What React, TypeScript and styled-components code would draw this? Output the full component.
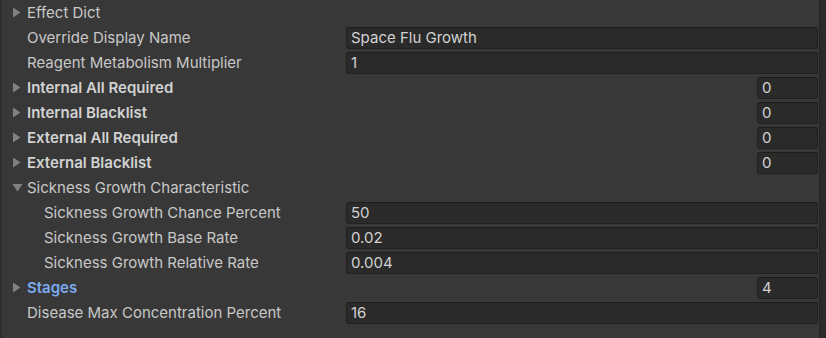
import React from "react";
import styled, { createGlobalStyle } from "styled-components";

const Global = createGlobalStyle`
  html, body { margin: 0; padding: 0; background: #383838; }
  body { font-family: Inter, "Noto Sans", sans-serif; }
`;

const Frame = styled.div`
  display: flex;
  width: 826px;
  height: 338px;
  background: #383838;
  overflow: hidden;
`;

const LeftEdge = styled.div`
  width: 2px;
  flex: none;
  background: #2e2e2e;
`;

const Panel = styled.div`
  flex: 1;
  display: flex;
  flex-direction: column;
`;

const ScrollStrip = styled.div`
  width: 6px;
  flex: none;
  background: #2b2b2b;
  border-left: 1px solid #242424;
`;

const Row = styled.div`
  display: grid;
  grid-template-columns: 344px 1fr;
  align-items: center;
  height: 25px;
  padding-right: 1px;
`;

const LabelCell = styled.div<{ $indent: number }>`
  display: flex;
  align-items: center;
  padding-left: ${(p) => 10 + p.$indent * 17}px;
  min-width: 0;
`;

const Arrow = styled.span`
  width: 15px;
  flex: none;
  display: flex;
  align-items: center;
`;

const Label = styled.span<{ $bold?: boolean; $blue?: boolean }>`
  font-size: 15px;
  font-weight: ${(p) => (p.$bold ? 600 : 400)};
  color: ${(p) => (p.$blue ? "#7babf1" : p.$bold ? "#d2d2d2" : "#c8c8c8")};
  white-space: nowrap;
`;

const Field = styled.div<{ $small?: boolean }>`
  box-sizing: border-box;
  height: 22px;
  justify-self: ${(p) => (p.$small ? "end" : "stretch")};
  width: ${(p) => (p.$small ? "61px" : "auto")};
  background: #2a2a2a;
  border: 1px solid #212121;
  border-top-color: #1d1d1d;
  border-radius: 3px;
  padding-left: 4px;
  display: flex;
  align-items: center;
  font-size: 15px;
  color: #d2d2d2;
  white-space: nowrap;
`;

const RightTri = () => (
  <svg width="9" height="11" viewBox="0 0 9 11">
    <path d="M1 0.5 L8.5 5.5 L1 10.5 Z" fill="#808080" />
  </svg>
);
const DownTri = () => (
  <svg width="11" height="9" viewBox="0 0 11 9">
    <path d="M0.5 1 L10.5 1 L5.5 8.5 Z" fill="#808080" />
  </svg>
);

type Item = {
  label: string;
  fold?: "closed" | "open";
  indent?: number;
  bold?: boolean;
  blue?: boolean;
  value?: string;
  small?: boolean;
};

const items: Item[] = [
  { label: "Effect Dict", fold: "closed" },
  { label: "Override Display Name", value: "Space Flu Growth" },
  { label: "Reagent Metabolism Multiplier", value: "1" },
  { label: "Internal All Required", fold: "closed", bold: true, value: "0", small: true },
  { label: "Internal Blacklist", fold: "closed", bold: true, value: "0", small: true },
  { label: "External All Required", fold: "closed", bold: true, value: "0", small: true },
  { label: "External Blacklist", fold: "closed", bold: true, value: "0", small: true },
  { label: "Sickness Growth Characteristic", fold: "open" },
  { label: "Sickness Growth Chance Percent", indent: 1, value: "50" },
  { label: "Sickness Growth Base Rate", indent: 1, value: "0.02" },
  { label: "Sickness Growth Relative Rate", indent: 1, value: "0.004" },
  { label: "Stages", fold: "closed", bold: true, blue: true, value: "4", small: true },
  { label: "Disease Max Concentration Percent", value: "16" },
];

export default function App() {
  return (
    <>
      <Global />
      <Frame>
        <LeftEdge />
        <Panel>
          {items.map((it) => (
            <Row key={it.label}>
              <LabelCell $indent={it.indent ?? 0}>
                <Arrow>
                  {it.fold === "closed" && <RightTri />}
                  {it.fold === "open" && <DownTri />}
                </Arrow>
                <Label $bold={it.bold} $blue={it.blue}>
                  {it.label}
                </Label>
              </LabelCell>
              {it.value !== undefined && <Field $small={it.small}>{it.value}</Field>}
            </Row>
          ))}
        </Panel>
        <ScrollStrip />
      </Frame>
    </>
  );
}
